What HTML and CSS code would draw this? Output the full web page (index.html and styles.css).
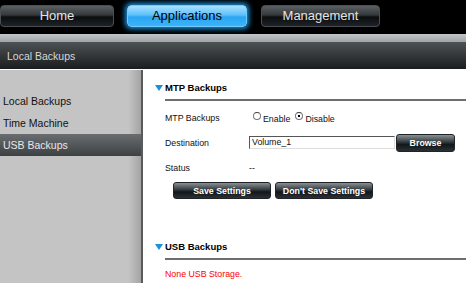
FILE: index.html
```html
<!DOCTYPE html>
<html lang="en">
  <head>
    <meta charset="UTF-8" />
    <title>USB Backups</title>
    <link rel="stylesheet" href="styles.css">
  </head>
  <body>
    <div class="topbar">
      <div class="tab tab-home">Home</div>
      <div class="tab tab-active">Applications</div>
      <div class="tab">Management</div>
    </div>
    <div class="strip"></div>
    <div class="titlebar">Local Backups</div>
    <div class="main">
      <nav class="sidebar">
        <div class="nav-item">Local Backups</div>
        <div class="nav-item">Time Machine</div>
        <div class="nav-item selected">USB Backups</div>
      </nav>
      <div class="content">
        <div class="section-head">
          <span class="arrow"></span>
          <div class="section-title">MTP Backups</div>
        </div>
        <div class="rows">
          <div class="row">
            <div class="label">MTP Backups</div>
            <div class="value">
              <span class="radio"></span><span class="radio-text">Enable</span>
              <span class="radio checked"></span><span class="radio-text">Disable</span>
            </div>
          </div>
          <div class="row">
            <div class="label">Destination</div>
            <div class="value">
              <div class="input">Volume_1</div>
              <button class="btn btn-browse">Browse</button>
            </div>
          </div>
          <div class="row">
            <div class="label">Status</div>
            <div class="value">--</div>
          </div>
        </div>
        <div class="actions">
          <button class="btn btn-wide">Save Settings</button>
          <button class="btn btn-wide">Don't Save Settings</button>
        </div>

        <div class="section-head section-usb">
          <span class="arrow"></span>
          <div class="section-title">USB Backups</div>
        </div>
        <p class="error">None USB Storage.</p>
      </div>
    </div>
  </body>
</html>
```

FILE: styles.css
```css
body {
  margin: 0;
  width: 466px;
  height: 283px;
  overflow: hidden;
  background-color: #fff;
  font-family: "Liberation Sans", Arial, sans-serif;
}
.topbar {
  height: 34px;
  background-color: #000;
  display: flex;
  align-items: flex-start;
  padding-top: 5px;
  box-sizing: border-box;
}
.tab {
  width: 119px;
  height: 22px;
  margin-left: 14px;
  box-sizing: border-box;
  border: 1px solid #4a4e52;
  border-radius: 4px;
  background: linear-gradient(#5b6064 0%, #34383b 45%, #0c0e10 55%, #1d2226 100%);
  color: #e4e4e4;
  font-size: 13px;
  line-height: 20px;
  text-align: center;
}
.tab-home {
  width: 114px;
  margin-left: 0;
}
.tab-active {
  width: 120px;
  margin-left: 13px;
  border-color: #6fcaff;
  background: linear-gradient(#a8e0ff 0%, #5cc0fb 45%, #2aa6f2 55%, #3cb3fa 100%);
  box-shadow: 0 0 5px 2px #1d8fd8;
  color: #000;
}
.strip {
  height: 8px;
  background: linear-gradient(#c3c6c8, #9fa3a5);
}
.titlebar {
  height: 27px;
  background: linear-gradient(#4d5256, #1b1c1d);
  color: #d8d8d8;
  font-size: 10.5px;
  line-height: 28px;
  padding-left: 7px;
}
.main {
  display: flex;
  height: 214px;
  border-top: 1px solid #fff;
}
.sidebar {
  width: 143px;
  flex-shrink: 0;
  padding-top: 20px;
  box-sizing: border-box;
  border-right: 2px solid #5a5a5a;
  background: linear-gradient(to right, #c4c4c4 91%, #a4a4a4);
}
.nav-item {
  height: 22px;
  line-height: 22px;
  padding-left: 3px;
  font-size: 10.5px;
  color: #111;
}
.nav-item.selected {
  background: linear-gradient(#6a6d70, #3e4144);
  color: #e8e8e8;
}
.content {
  flex: 1;
  padding: 11px 0 0 12px;
  font-size: 8.8px;
  color: #111;
}
.section-head {
  display: flex;
  align-items: flex-start;
}
.arrow {
  width: 0;
  height: 0;
  margin-top: 4px;
  border-left: 4px solid transparent;
  border-right: 4px solid transparent;
  border-top: 6px solid #1a90e0;
  margin-right: 2px;
}
.section-title {
  flex: 1;
  font-weight: bold;
  font-size: 9.5px;
  line-height: 14px;
  padding-bottom: 4px;
  border-bottom: 2px solid #6e6e6e;
  color: #000;
}
.rows {
  margin-top: 4px;
}
.row {
  display: flex;
  align-items: center;
  height: 25px;
  padding-left: 10px;
}
.label {
  width: 84px;
}
.value {
  display: flex;
  align-items: center;
}
.radio {
  width: 6px;
  height: 6px;
  border: 1px solid #777;
  border-top-color: #444;
  border-radius: 50%;
  position: relative;
  margin: -3px 2px 0 4px;
}
.radio.checked::after {
  content: "";
  position: absolute;
  left: 2px;
  top: 2px;
  width: 2px;
  height: 2px;
  background: #000;
}
.radio-text {
  margin-top: 3px;
}
.radio-text + .radio {
  margin-left: 5px;
}
.input {
  width: 146px;
  height: 13px;
  box-sizing: border-box;
  border: 1px solid #ddd;
  border-top-color: #555;
  border-left-color: #555;
  line-height: 11px;
  padding-left: 2px;
}
.btn {
  font-family: inherit;
  font-weight: bold;
  font-size: 8.8px;
  color: #fff;
  border: 1px solid #202428;
  border-radius: 3px;
  background: linear-gradient(#8a9094 0%, #3c4347 40%, #121619 60%, #2a3136 100%);
  padding: 0;
}
.btn-browse {
  width: 59px;
  height: 18px;
  margin-left: 1px;
}
.actions {
  display: flex;
  gap: 4px;
  padding-left: 18px;
  margin-top: 2px;
}
.btn-wide {
  width: 98px;
  height: 17px;
}
.section-usb {
  margin-top: 41px;
}
.error {
  margin: 9px 0 0 10px;
  color: #f00;
}
```
